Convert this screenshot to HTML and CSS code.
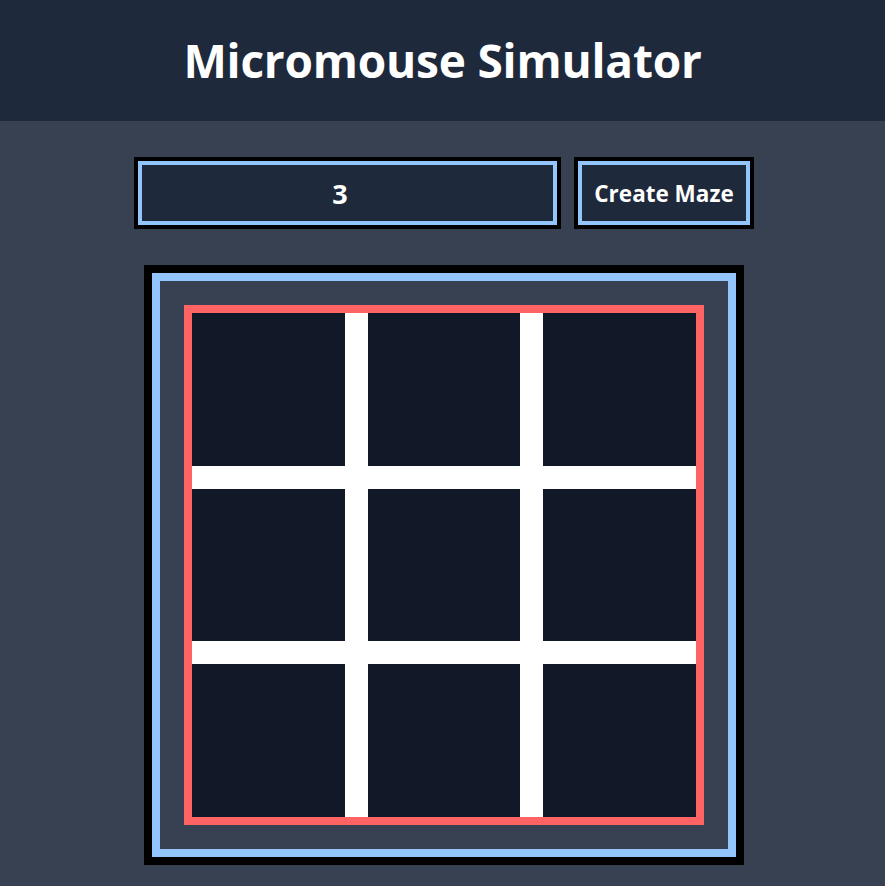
FILE: index.html
```html
<!DOCTYPE html>
<html>
<head>
<meta charset="utf-8">
<link rel="stylesheet" href="styles.css">
</head>
<body>
<header class="header">
  <h1 class="title">Micromouse Simulator</h1>
</header>
<main class="main">
  <div class="controls">
    <input class="size-input" type="text" value="3">
    <button class="create-btn">Create Maze</button>
  </div>
  <div class="maze-frame">
    <div class="maze-wall">
      <div class="maze-grid">
        <div class="cell"></div><div class="cell"></div><div class="cell"></div>
        <div class="cell"></div><div class="cell"></div><div class="cell"></div>
        <div class="cell"></div><div class="cell"></div><div class="cell"></div>
      </div>
    </div>
  </div>
</main>
</body>
</html>
```

FILE: styles.css
```css
* { box-sizing: border-box; }
html, body {
  margin: 0;
  padding: 0;
  background: #374151;
  font-family: "Open Sans", "Noto Sans", sans-serif;
  color: #ffffff;
}
.header {
  height: 121px;
  background: #1e293b;
  display: flex;
  align-items: center;
  justify-content: center;
}
.title {
  margin: 0;
  font-size: 46px;
  font-weight: 700;
  letter-spacing: -0.2px;
  line-height: 1;
  padding-bottom: 2px;
}
.main {
  display: flex;
  flex-direction: column;
  align-items: center;
  padding: 40px 0 0 3px;
  gap: 40px;
}
.controls {
  display: flex;
  gap: 21px;
}
.size-input {
  width: 419px;
  height: 64px;
  background: #1e293b;
  border: 4px solid #93c5fd;
  outline: 4px solid #000;
  color: #fff;
  font-family: inherit;
  font-weight: 700;
  font-size: 27px;
  text-align: center;
  padding: 0 15px 0 0;
  margin: 0;
}
.create-btn {
  width: 172px;
  height: 64px;
  background: #1e293b;
  border: 4px solid #93c5fd;
  outline: 4px solid #000;
  color: #fff;
  font-family: inherit;
  font-weight: 700;
  font-size: 22.5px;
  padding: 0;
  margin: 0;
  letter-spacing: 0;
}
.maze-frame {
  width: 600px;
  height: 600px;
  border: 8px solid #000;
  background: #374151;
  padding: 0;
}
.maze-wall {
  height: 100%;
  border: 8px solid #93c5fd;
  padding: 24px;
}
.maze-grid {
  width: 520px;
  height: 520px;
  border: 8px solid #ff6363;
  background: #ffffff;
  display: grid;
  grid-template-columns: 153px 152px 153px;
  grid-template-rows: 153px 152px 153px;
  gap: 23px;
}
.cell {
  background: #111827;
}
```
